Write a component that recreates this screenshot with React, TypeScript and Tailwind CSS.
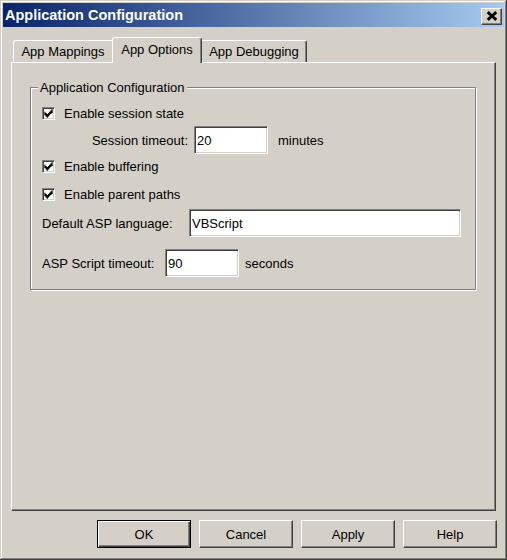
import React from "react";

function Check() {
  return (
    <div className="w-[13px] h-[13px] shrink-0 bg-white flex items-center justify-center border border-t-[#808080] border-l-[#808080] border-r-white border-b-white shadow-[inset_1px_1px_0_#404040,inset_-1px_-1px_0_#d4d0c8]">
      <svg width="9" height="9" viewBox="-0.3 -0.3 7.6 7.6">
        <path
          fill="#000"
          d="M6 0h1v1h-1z M5 1h2v1h-2z M0 2h1v1h-1z M4 2h3v1h-3z M0 3h2v1h-2z M3 3h3v1h-3z M0 4h5v1h-5z M1 5h3v1h-3z M2 6h1v1h-1z"
        />
      </svg>
    </div>
  );
}

function CheckRow({ label, className }: { label: string; className: string }) {
  return (
    <div className={className}>
      <Check />
      <span className="ml-[9px] leading-none">{label}</span>
    </div>
  );
}

function Field({ value, className }: { value: string; className: string }) {
  return (
    <div className={className}>
      <span className="leading-none">{value}</span>
    </div>
  );
}

export default function App() {
  const field =
    "h-[28px] shrink-0 bg-white flex items-center pl-[2px] border border-t-[#808080] border-l-[#808080] border-r-white border-b-white shadow-[inset_1px_1px_0_#404040,inset_-1px_-1px_0_#d4d0c8]";
  return (
    <div className="w-[507px] h-[560px] bg-[#d4d0c8] p-[3px] flex flex-col font-['Liberation_Sans',Arial,sans-serif] text-[13px] text-black shadow-[inset_-1px_-1px_0_#404040,inset_1px_1px_0_#d4d0c8,inset_-2px_-2px_0_#808080,inset_2px_2px_0_#fff]">
      {/* Title bar */}
      <div className="h-[24px] shrink-0 flex items-center bg-[linear-gradient(to_right,#0a246a,#a6caf0)] pl-[2px] pr-[2px]">
        <span className="flex-1 text-white font-bold text-[14.5px] leading-none">
          Application Configuration
        </span>
        <div className="mt-[2px] w-[21px] h-[17px] bg-[#d4d0c8] flex items-center justify-center border border-t-white border-l-white border-r-[#404040] border-b-[#404040] shadow-[inset_-1px_-1px_0_#808080]">
          <svg width="12" height="10" viewBox="0 0 8 7">
            <path d="M1 0.8 L7 6.2 M7 0.8 L1 6.2" stroke="#000" strokeWidth="2" fill="none" />
          </svg>
        </div>
      </div>

      {/* Tabs + panel */}
      <div className="px-[8px] flex flex-col">
        <div className="mt-[10px] h-[25px] flex items-end pl-[2px]">
          <div className="w-[99px] h-[22px] flex items-center justify-center border-t border-l border-t-white border-l-white rounded-tl-[3px]">
            <span className="leading-none">App Mappings</span>
          </div>
          <div className="relative z-10 -mb-[1px] w-[90px] h-[26px] bg-[#d4d0c8] flex items-center justify-center pb-[2px] border-t border-l border-r border-t-white border-l-white border-r-[#404040] rounded-t-[3px] shadow-[inset_-1px_0_0_#808080]">
            <span className="leading-none">App Options</span>
          </div>
          <div className="w-[105px] h-[22px] flex items-center justify-center border-t border-r border-t-white border-r-[#404040] rounded-tr-[3px] shadow-[inset_-1px_0_0_#808080]">
            <span className="leading-none">App Debugging</span>
          </div>
        </div>

        <div className="h-[449px] flex flex-col border border-t-white border-l-white border-r-[#404040] border-b-[#404040] shadow-[inset_-1px_-1px_0_#808080]">
          <fieldset className="mt-[17px] ml-[18px] w-[446px] pb-[12px] border border-[#808080] shadow-[inset_1px_1px_0_#fff,1px_1px_0_#fff]">
            <legend className="ml-[7px] px-[2px] leading-[15px] bg-[#d4d0c8]">
              Application Configuration
            </legend>
            <CheckRow
              label="Enable session state"
              className="mt-[9px] h-[18px] flex items-center pl-[11px]"
            />
            <div className="mt-[4px] h-[28px] flex items-center pl-[11px]">
              <span className="w-[146px] text-right leading-none">Session timeout:</span>
              <Field value="20" className={`ml-[6px] w-[74px] ${field}`} />
              <span className="ml-[10px] leading-none">minutes</span>
            </div>
            <CheckRow
              label="Enable buffering"
              className="mt-[3px] h-[18px] flex items-center pl-[11px]"
            />
            <CheckRow
              label="Enable parent paths"
              className="mt-[10px] h-[18px] flex items-center pl-[11px]"
            />
            <div className="mt-[6px] h-[28px] flex items-center pl-[11px]">
              <span className="w-[147px] leading-none">Default ASP language:</span>
              <Field value="VBScript" className={`w-[272px] ${field}`} />
            </div>
            <div className="mt-[12px] h-[28px] flex items-center pl-[11px]">
              <span className="w-[123px] leading-none">ASP Script timeout:</span>
              <Field value="90" className={`w-[74px] ${field}`} />
              <span className="ml-[6px] leading-none">seconds</span>
            </div>
          </fieldset>
        </div>
      </div>

      {/* Buttons */}
      <div className="mt-[9px] h-[28px] flex justify-end gap-[8px] pr-[7px]">
        <div className="w-[94px] h-[28px] flex items-center justify-center border border-black shadow-[inset_1px_1px_0_#fff,inset_-1px_-1px_0_#404040,inset_-2px_-2px_0_#808080]">
          <span className="leading-none">OK</span>
        </div>
        <div className="w-[94px] h-[28px] flex items-center justify-center border border-t-white border-l-white border-r-[#404040] border-b-[#404040] shadow-[inset_-1px_-1px_0_#808080]">
          <span className="leading-none">Cancel</span>
        </div>
        <div className="w-[94px] h-[28px] flex items-center justify-center border border-t-white border-l-white border-r-[#404040] border-b-[#404040] shadow-[inset_-1px_-1px_0_#808080]">
          <span className="leading-none">Apply</span>
        </div>
        <div className="w-[94px] h-[28px] flex items-center justify-center border border-t-white border-l-white border-r-[#404040] border-b-[#404040] shadow-[inset_-1px_-1px_0_#808080]">
          <span className="leading-none">Help</span>
        </div>
      </div>
    </div>
  );
}
